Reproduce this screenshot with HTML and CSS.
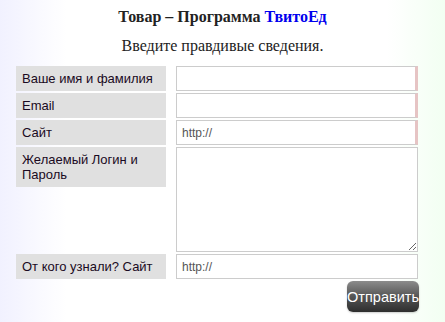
FILE: index.html
```html
<!DOCTYPE html>
<html lang="ru">

<head>
    <meta charset="UTF-8">
    <title>Товар – Программа ТвитоЕд</title>
    <link rel="stylesheet" href="styles.css">
</head>

<body>
    <h1 class="title">Товар – Программа <a href="#">ТвитоЕд</a></h1>
    <p class="intro">Введите правдивые сведения.</p>
    <form class="order-form">
        <label class="field-label" for="fio">Ваше имя и фамилия</label>
        <input class="field required" type="text" id="fio">

        <label class="field-label" for="email">Email</label>
        <input class="field required" type="text" id="email">

        <label class="field-label" for="site">Сайт</label>
        <input class="field required" type="text" id="site" value="http://">

        <label class="field-label" for="login">Желаемый Логин и Пароль</label>
        <textarea class="field area" id="login"></textarea>

        <label class="field-label" for="ref">От кого узнали? Сайт</label>
        <input class="field" type="text" id="ref" value="http://">

        <div class="actions">
            <button type="button" class="send">Отправить</button>
        </div>
    </form>
</body>

</html>
```

FILE: styles.css
```css
body {
    margin: 0;
    padding: 0 0 10px;
    min-height: 322px;
    box-sizing: border-box;
    font-family: "Liberation Serif", "Times New Roman", serif;
    color: #222;
    background: linear-gradient(to right, #f1f1ff 0%, #ffffff 15%, #ffffff 87%, #f2fff2 100%);
}

.title {
    margin: 0;
    padding-top: 8px;
    font-size: 16px;
    line-height: 18px;
    font-weight: bold;
    text-align: center;
}

.title a {
    color: #0000ee;
    text-decoration: none;
}

.intro {
    margin: 11px 0 11px;
    font-size: 16px;
    line-height: 18px;
    text-align: center;
}

.order-form {
    display: grid;
    grid-template-columns: 150px 242px;
    column-gap: 10px;
    row-gap: 2px;
    margin: 0 0 0 16px;
    font-family: "Liberation Sans", Arial, sans-serif;
}

.field-label {
    align-self: start;
    padding: 5px 6px;
    font-size: 13px;
    line-height: 15px;
    color: #1a0a22;
    background: #e0e0e0;
}

.field {
    box-sizing: border-box;
    height: 25px;
    margin: 0;
    padding: 0 5px;
    border: 1px solid #cccccc;
    background: #fff;
    font-family: "Liberation Sans", Arial, sans-serif;
    font-size: 12px;
    color: #555;
    outline: none;
}

.required {
    border-right: 3px solid #e6c4c4;
}

.area {
    height: 105px;
    padding: 4px 5px;
    resize: vertical;
}

.actions {
    grid-column: 1 / 3;
    display: flex;
    justify-content: flex-end;
    margin-right: -1px;
}

.send {
    width: 72px;
    height: 31px;
    margin-top: 0;
    padding: 0;
    border: none;
    border-radius: 6px;
    background: linear-gradient(to bottom, #8c8c8c 0%, #555555 50%, #2e2e2e 100%);
    box-shadow: 0 1px 2px rgba(0, 0, 0, 0.2);
    color: #fff;
    font-family: "Liberation Sans", Arial, sans-serif;
    font-size: 14.5px;
    white-space: nowrap;
    overflow: visible;
}
```
